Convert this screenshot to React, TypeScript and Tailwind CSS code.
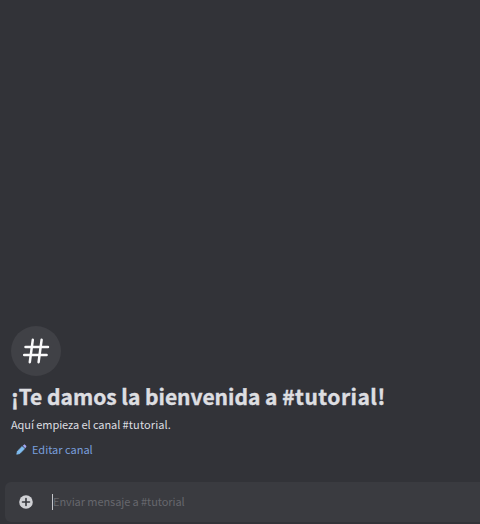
export default function App() {
  return (
    <div className="flex h-[524px] w-[480px] flex-col overflow-hidden bg-[#323338] font-['Noto_Sans_CJK_SC',sans-serif] text-[#dddee1]">
      <main className="flex flex-1 flex-col items-start justify-end pb-[23px] pl-[11px]">
        <div className="flex size-[50px] items-center justify-center rounded-full bg-[#404146]">
          <svg className="size-[28px]" viewBox="0 0 28 28" fill="none" stroke="#fafafb" strokeWidth="2.5" strokeLinecap="round">
            <path d="M10.8 2.8 7.8 25.2M19.6 2.8 16.6 25.2M3.5 10H26M2.2 18H24.6" />
          </svg>
        </div>
        <h1 className="mt-[2px] h-9 whitespace-nowrap text-[21px] leading-9 font-bold tracking-[-0.02px] [-webkit-text-stroke:0.4px]">¡Te damos la bienvenida a <span className="tracking-[0.5px]">#tutorial!</span></h1>
        <p className="h-5 whitespace-nowrap text-[11px] leading-5 tracking-[-0.08px]">Aquí empieza el canal <span className="tracking-[0.12px]">#tutorial.</span></p>
        <button className="mt-[5px] ml-[5px] flex h-5 items-center gap-[5px] text-[11px] leading-5 text-[#799fdc]">
          <svg className="size-[11px]" viewBox="0 0 12 12">
            <path d="m.8 11.2.8-3.4 5.1-5.1 2.6 2.6-5.1 5.1z" fill="#80bdf0" stroke="#80bdf0" strokeWidth=".8" strokeLinejoin="round" />
            <path d="m7.4 2 1-1c.5-.5 1.2-.5 1.7 0l.9.9c.5.5.5 1.2 0 1.7l-1 1z" fill="#a3a7f2" />
          </svg>
          <span className="whitespace-nowrap">Editar canal</span>
        </button>
      </main>
      <footer className="pl-[5px] pb-[2px]">
        <div className="flex h-10 items-center rounded-l-[6px] bg-[#3a3b40] pl-[14px]">
          <svg className="size-[14px]" viewBox="0 0 14 14">
            <circle cx="7" cy="7" r="6.8" fill="#d0d1d5" />
            <path d="M7 3.5v7M3.5 7h7" stroke="#36373c" strokeWidth="1.6" strokeLinecap="round" />
          </svg>
          <span className="ml-[19px] h-4 w-px bg-[#c4c5c9]" />
          <span className="pb-[2px] whitespace-nowrap text-[11px] leading-5 tracking-[-0.08px] text-[#66676d]">Enviar mensaje a #tutorial</span>
        </div>
      </footer>
    </div>
  );
}
